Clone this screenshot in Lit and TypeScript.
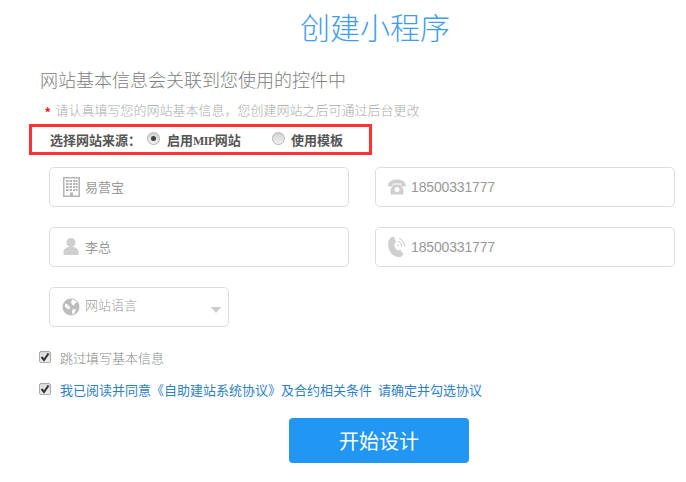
import { LitElement, html, css } from "lit";
import { customElement } from "lit/decorators.js";

const buildingIcon = html`<svg class="icon" width="18" height="20" viewBox="0 0 18 20"><path fill="#b4b4b4" fill-rule="evenodd" d="M1 0h17v20H1zM2.500 1.500v17H8v-3h3v3h5.500v-17zM4 3h2.500v2H4zm3.500 0H10v2H7.500zM11 3h2.500v2H11zM14 3h1.500v2H14zM4 6h2.500v2H4zm3.500 0H10v2H7.500zM11 6h2.500v2H11zM14 6h1.500v2H14zM4 9h2.500v2H4zm3.500 0H10v2H7.500zM11 9h2.500v2H11zM14 9h1.500v2H14zM4 12h2.500v2H4zm3.500 0H10v2H7.500zM11 12h2.500v2H11zM14 12h1.500v2H14z"/></svg>`;
const userIcon = html`<svg class="icon" width="18" height="20" viewBox="0 0 18 20"><circle cx="9" cy="5.500" r="4.500" fill="#cfcfcf"/><path fill="#cfcfcf" d="M1.500 18v-3.500C1.500 12 4 10.500 6.500 10h5c2.500.5 5 2 5 4.500V18z"/></svg>`;
const globeIcon = html`<svg class="icon" width="18" height="18" viewBox="0 0 18 18"><circle cx="9" cy="9" r="8.500" fill="#bdbdbd"/><path fill="#fff" d="M10 1.500c2 .2 4 1.300 5 2.800l-2 1.200-1 2-2-1-1-2.500zM3 5.500l2.500 1L8 9l-.5 2.500-2-.5L3 8.500zM11 11l3 .5-1.500 3.500-2 1.500-.5-3z"/></svg>`;
const phoneIcon = html`<svg class="icon" width="18" height="16" viewBox="0 0 18 16"><path fill="#cfcfcf" fill-rule="evenodd" d="M0 6C1 2 5 .5 9 .5S17 2 18 6l-.5 1.500h-3.500L13 4.500H5L4 7.500H.5zM5.500 5.500h7l3 5v5h-13v-5zM9 8a2.500 2.500 0 1 0 0 5 2.500 2.500 0 0 0 0-5z"/></svg>`;
const mobileIcon = html`<svg class="icon" width="18" height="22" viewBox="0 0 18 22"><path fill="#cfcfcf" d="M2.500 1.500 6 .8 8 6 6 8c.3 2 1.200 4.500 3.500 6.500l2.500-1 3.500 4.500-2.500 3C9 21.500 4.500 20 2 15.500-.5 11-.5 5 2.500 1.500z"/><g fill="none" stroke="#cfcfcf" stroke-width="1.200"><path d="M9 8.500c1 .3 1.500 1 1.500 2"/><path d="M10 5.500c2 .5 3.500 2.200 3.500 5"/><path d="M11 2.500c3 .7 5.500 4 5.500 8"/></g></svg>`;

@customElement("app-root")
export class AppRoot extends LitElement {
  static styles = css`
    :host {
      display: block;
      width: 686px;
      height: 482px;
      overflow: hidden;
      background: #fff;
      font-family: "Noto Sans CJK SC", "Liberation Sans", sans-serif;
      font-size: 13px;
      color: #999;
    }
    .page {
      display: flex;
      flex-direction: column;
      align-items: flex-start;
    }
    .title {
      margin: 0 0 0 300px;
      font-size: 30px;
      font-weight: 300;
      line-height: 52px;
      color: #3f9cf0;
    }
    .subtitle {
      margin: 15px 0 0 40px;
      font-size: 18px;
      font-weight: 300;
      line-height: 24px;
      color: #808080;
    }
    .hint {
      display: flex;
      gap: 4px;
      height: 20px;
      margin: 9px 0 0 44px;
      line-height: 20px;
      font-weight: 300;
      color: #aaa;
    }
    .star { color: #f00; font-size: 16px; font-weight: 400; line-height: 26px; }
    .source {
      box-sizing: border-box;
      display: flex;
      align-items: center;
      width: 343px;
      height: 31px;
      margin: 4px 0 0 29px;
      padding-left: 18px;
      border: 3px solid #f33;
      font-weight: 700;
      color: #555;
    }
    .latin { font-family: "Liberation Serif", serif; font-size: 12px; letter-spacing: -0.5px; }
    .option { display: flex; align-items: center; gap: 7px; }
    .option.first { margin-left: 6px; }
    .option.second { margin-left: 31px; gap: 6px; }
    .radio {
      box-sizing: border-box;
      display: flex;
      align-items: center;
      justify-content: center;
      width: 13px;
      height: 13px;
      margin-top: -3px;
      border: 1px solid #b5b5b5;
      border-radius: 50%;
      background: linear-gradient(#d0d0d0, #f2f2f2);
    }
    .dot { width: 5px; height: 5px; border-radius: 50%; background: #444; }
    .fields {
      display: grid;
      grid-template-columns: 300px 300px;
      grid-auto-rows: 40px;
      column-gap: 26px;
      row-gap: 20px;
      margin: 12px 0 0 49px;
    }
    .field {
      box-sizing: border-box;
      display: flex;
      align-items: center;
      gap: 5px;
      padding-left: 12px;
      border: 1px solid #ddd;
      border-radius: 5px;
      background: #fff;
    }
    .icon { flex: none; }
    .field input {
      flex: 1;
      min-width: 0;
      height: 20px;
      margin-top: -2px;
      padding: 0;
      border: 0;
      outline: 0;
      background: transparent;
      font: inherit;
      color: #999;
    }
    .field input.num {
      margin-top: 0;
      font-family: "Liberation Sans", sans-serif;
      font-size: 14px;
      letter-spacing: -0.15px;
    }
    .select { width: 180px; padding-right: 7px; }
    .select .text { flex: 1; font-weight: 300; line-height: 20px; margin-top: -5px; }
    .caret {
      width: 0;
      height: 0;
      margin-top: 5px;
      border: 5px solid transparent;
      border-top: 6px solid #ccc;
      border-bottom: 0;
    }
    .check-row {
      display: flex;
      align-items: center;
      gap: 9px;
      margin-left: 39px;
      line-height: 20px;
      font-weight: 300;
    }
    .check-row.skip { margin-top: 21px; color: #888; }
    .check-row.agree { margin-top: 12px; color: #2f7fc8; font-weight: 400; word-spacing: 3px; }
    .box {
      box-sizing: border-box;
      display: flex;
      align-items: center;
      justify-content: center;
      width: 12px;
      height: 12px;
      margin-top: -3px;
      border: 1px solid #aaa;
      border-radius: 2px;
      background: linear-gradient(#d8d8d8, #f0f0f0);
    }
    .submit {
      width: 180px;
      height: 45px;
      margin: 18px 0 0 289px;
      padding: 0;
      border: 0;
      border-radius: 4px;
      background: #2196f3;
      color: #fff;
      font: inherit;
      font-size: 20px;
      font-weight: 400;
    }
  `;

  render() {
    const check = html`<span class="box"><svg width="10" height="10" viewBox="0 0 10 10"><path d="M1.500 5 4 8l4.500-6.500" fill="none" stroke="#333" stroke-width="2"/></svg></span>`;
    return html`
      <div class="page">
        <h1 class="title">创建小程序</h1>
        <div class="subtitle">网站基本信息会关联到您使用的控件中</div>
        <div class="hint"><span class="star">*</span><span>请认真填写您的网站基本信息，您创建网站之后可通过后台更改</span></div>
        <div class="source">
          <span>选择网站来源：</span>
          <span class="option first"><span class="radio"><span class="dot"></span></span><span>启用<span class="latin">MIP</span>网站</span></span>
          <span class="option second"><span class="radio"></span><span>使用模板</span></span>
        </div>
        <div class="fields">
          <label class="field">${buildingIcon}<input value="易营宝" /></label>
          <label class="field">${phoneIcon}<input class="num" value="18500331777" /></label>
          <label class="field">${userIcon}<input value="李总" /></label>
          <label class="field">${mobileIcon}<input class="num" value="18500331777" /></label>
          <div class="field select">${globeIcon}<span class="text">网站语言</span><span class="caret"></span></div>
        </div>
        <div class="check-row skip">${check}<span>跳过填写基本信息</span></div>
        <div class="check-row agree">${check}<span>我已阅读并同意《自助建站系统协议》及合约相关条件 请确定并勾选协议</span></div>
        <button class="submit">开始设计</button>
      </div>
    `;
  }
}
